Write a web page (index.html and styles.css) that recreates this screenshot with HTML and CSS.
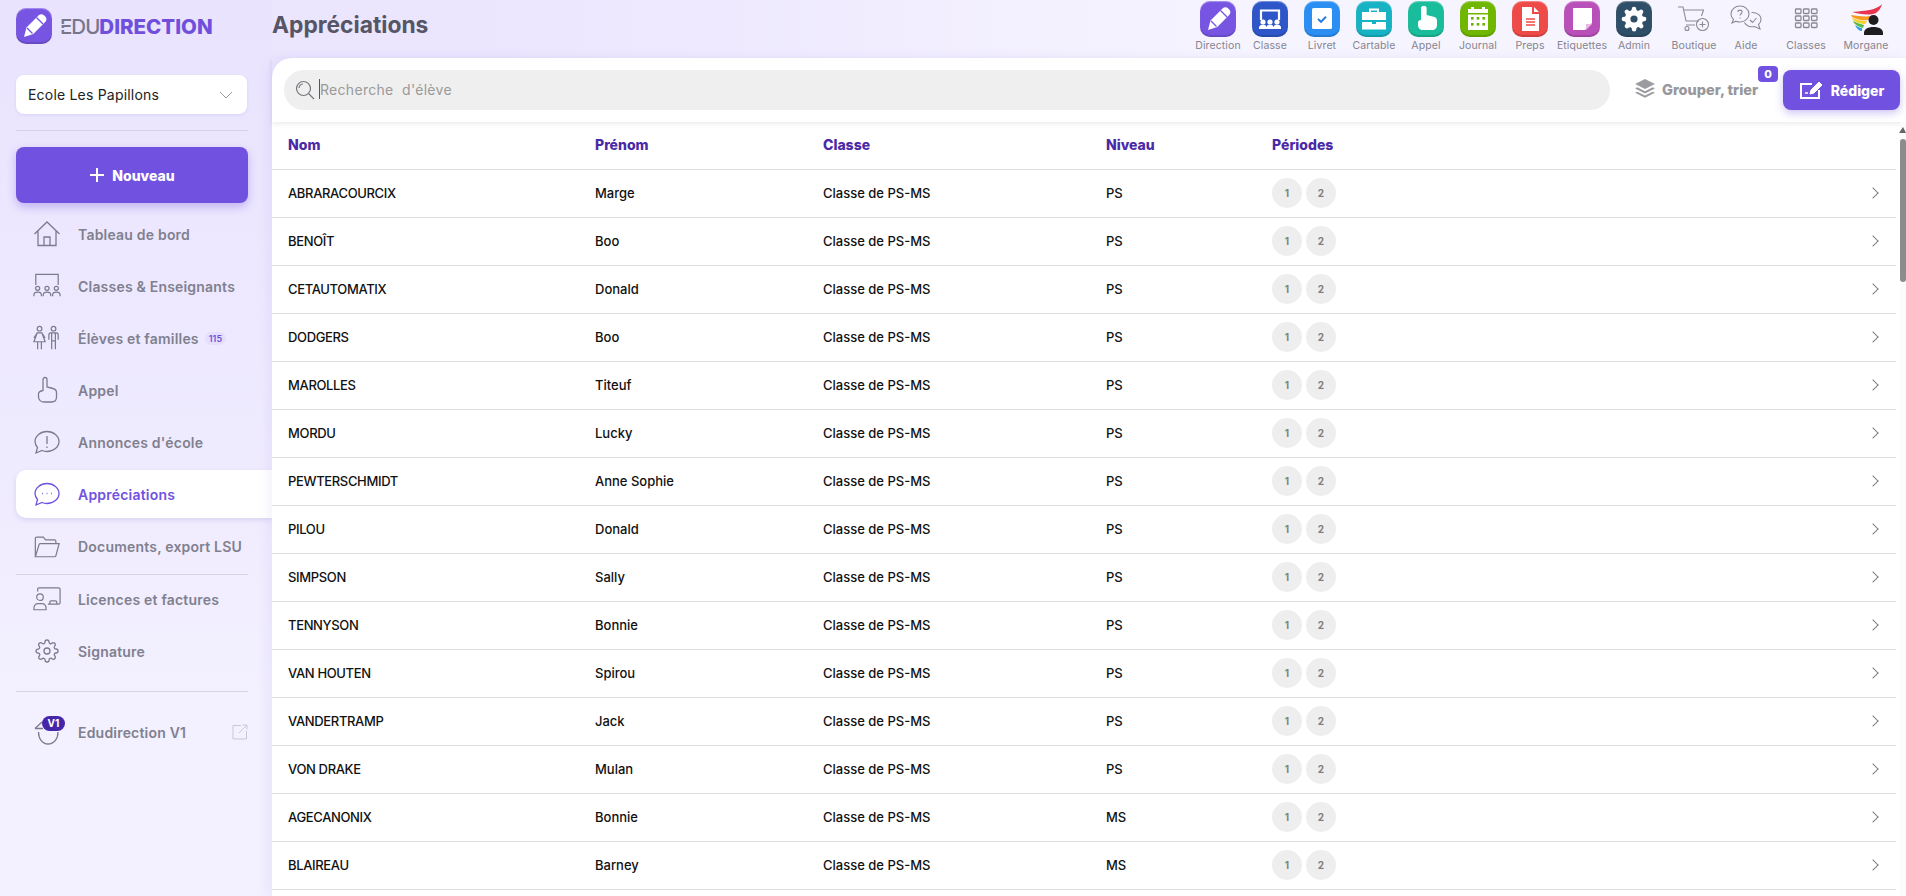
FILE: index.html
```html
<!DOCTYPE html>
<html lang="fr">
<head>
    <meta charset="UTF-8">
    <title>Appréciations</title>
    <link rel="stylesheet" href="styles.css">
</head>
<body>
    <svg class="defs" width="0" height="0">
        <symbol id="pen" viewBox="0 0 36 36">
            <path fill="#fff" d="M8 29l2.500-9.500L22.500 7.500c1.800-1.700 4-1.700 5.700 0l1 1c1.600 1.700 1.600 3.900 0 5.600L17.300 26z"/>
            <path fill="none" stroke="currentColor" stroke-width="1.300" d="M20.500 9.500l6.500 6.500M11 20l5.500 5.500"/>
        </symbol>
    </svg>

    <aside class="sidebar">
        <div class="logo">
            <span class="app logo-icon purple"><svg width="36" height="36"><use href="#pen"/></svg></span>
            <span class="logo-text"><span class="edu">EDU</span>DIRECTION</span>
        </div>

        <div class="school">
            <span>Ecole Les Papillons</span>
            <svg width="14" height="8" viewBox="0 0 14 8"><path d="M1 1l6 6 6-6" fill="none" stroke="#9a9aa5" stroke-width="1"/></svg>
        </div>
        <hr class="sep sep-top">

        <button class="new-btn">
            <svg width="16" height="16" viewBox="0 0 16 16"><path d="M8 1v14M1 8h14" stroke="#fff" stroke-width="2"/></svg>
            Nouveau
        </button>

        <nav class="nav">
            <a class="nav-item">
                <svg class="nav-icon" viewBox="0 0 28 28"><path d="M1.500 14L14 2l12.500 12M5 11v14.500h18V11M11 25.500V17h6v8.500"/></svg>
                Tableau de bord
            </a>
            <a class="nav-item">
                <svg class="nav-icon" viewBox="0 0 30 28"><path d="M3 13V1.500h24V13"/><circle cx="5" cy="16.500" r="2.200"/><circle cx="15" cy="16.500" r="2.200"/><circle cx="25" cy="16.500" r="2.200"/><path d="M1 25v-1.500c0-2 2-3 4-3s4 1 4 3V25M11 25v-1.500c0-2 2-3 4-3s4 1 4 3V25M21 25v-1.500c0-2 2-3 4-3s4 1 4 3V25"/></svg>
                Classes &amp; Enseignants
            </a>
            <a class="nav-item">
                <svg class="nav-icon" viewBox="0 0 30 28"><circle cx="7" cy="4" r="2.500"/><circle cx="22" cy="4" r="2.500"/><path d="M4.500 8.500h5L13 18H1zM1 14l3.500-5.500M13 14L9.500 8.500M5 18v8M9 18v8"/><path d="M19 8.500h6c1.500 0 2 1 2 2.500v5M17 16v-5c0-1.500.5-2.500 2-2.500M20 8.500V26M24 8.500V26M20 17h4"/></svg>
                Élèves et familles <span class="count">115</span>
            </a>
            <a class="nav-item">
                <svg class="nav-icon" viewBox="0 0 28 28"><path d="M10 15V3.500a2 2 0 0 1 4 0V11l6 1.500c2.500.6 3.500 1.800 3.500 4v4.500c0 3-2 5-5 5H11c-3 0-5.500-2-5.500-5v-3c0-1.500 1.500-3 4.500-3.500"/></svg>
                Appel
            </a>
            <a class="nav-item">
                <svg class="nav-icon" viewBox="0 0 28 28"><path d="M3 25l1.500-5.500C3 17.800 2 15.800 2 13.500 2 8 7.400 3.500 14 3.500S26 8 26 13.500 20.600 23.500 14 23.500c-2 0-3.500-.3-5-1z"/><path d="M14 8v8M14 18.500v1.500"/></svg>
                Annonces d'école
            </a>
            <a class="nav-item active">
                <svg class="nav-icon" viewBox="0 0 28 28"><path d="M3 25l1.500-5.500C3 17.800 2 15.800 2 13.500 2 8 7.400 3.500 14 3.500S26 8 26 13.500 20.600 23.500 14 23.500c-2 0-3.500-.3-5-1z"/><path d="M9 13.500h.8M13.600 13.500h.8M18.200 13.500h.8"/></svg>
                Appréciations
            </a>
            <a class="nav-item">
                <svg class="nav-icon" viewBox="0 0 30 28"><path d="M2.500 25V6c0-1 .7-1.500 1.500-1.500h7l2.500 3H23c1 0 1.500.5 1.500 1.500v2.500"/><path d="M2.500 25.500l4-13c.3-.8.8-1 1.500-1h20l-3.500 13c-.2.700-.7 1-1.500 1z"/></svg>
                Documents, export LSU
            </a>
            <hr class="sep sep-nav">
            <a class="nav-item">
                <svg class="nav-icon" viewBox="0 0 30 28"><path d="M5 6V3.500C5 2.500 5.500 2 6.500 2h21c1 0 1.500.5 1.500 1.500V18c0 1-.5 1.500-1.500 1.500H26M18 19.500v-2c0-1 .5-1.500 1.500-1.500H24c1 0 1.500.5 1.500 1.500v2M16 19.500h10"/><circle cx="7.500" cy="12" r="3.500"/><path d="M1 25.500v-2c0-2.500 2-4.500 4-4.500h5c2 0 4 2 4 4.500v2z"/></svg>
                Licences et factures
            </a>
            <a class="nav-item">
                <svg class="nav-icon gear" viewBox="0 0 24 24"><circle cx="12" cy="12" r="3"/><path d="M19.400 15a1.650 1.650 0 0 0 .33 1.820l.06.06a2 2 0 0 1 0 2.830 2 2 0 0 1-2.830 0l-.06-.06a1.650 1.650 0 0 0-1.820-.33 1.650 1.650 0 0 0-1 1.510V21a2 2 0 0 1-2 2 2 2 0 0 1-2-2v-.09A1.650 1.650 0 0 0 9 19.400a1.650 1.650 0 0 0-1.820.33l-.06.06a2 2 0 0 1-2.830 0 2 2 0 0 1 0-2.830l.06-.06a1.650 1.650 0 0 0 .33-1.820 1.650 1.650 0 0 0-1.510-1H3a2 2 0 0 1-2-2 2 2 0 0 1 2-2h.09A1.650 1.650 0 0 0 4.600 9a1.650 1.650 0 0 0-.33-1.820l-.06-.06a2 2 0 0 1 0-2.830 2 2 0 0 1 2.830 0l.06.06a1.650 1.650 0 0 0 1.820.33H9a1.650 1.650 0 0 0 1-1.510V3a2 2 0 0 1 2-2 2 2 0 0 1 2 2v.09a1.650 1.650 0 0 0 1 1.510 1.650 1.650 0 0 0 1.820-.33l.06-.06a2 2 0 0 1 2.830 0 2 2 0 0 1 0 2.830l-.06.06a1.650 1.650 0 0 0-.33 1.820V9a1.650 1.650 0 0 0 1.510 1H21a2 2 0 0 1 2 2 2 2 0 0 1-2 2h-.09a1.650 1.650 0 0 0-1.510 1z"/></svg>
                Signature
            </a>
            <hr class="sep sep-v1">
            <a class="nav-item v1-item">
                <span class="v1-icon">
                    <svg class="nav-icon" viewBox="0 0 28 28"><path d="M2 10.500h8M2 10.500L9 4M5.500 14c0 7 4 12 9.500 12 6 0 10-5 10-12"/></svg>
                    <span class="v1-badge">V1</span>
                </span>
                Edudirection V1
                <svg class="ext" width="16" height="16" viewBox="0 0 16 16"><path d="M9 1.500H1v13.500h13.500V7M7 9l8-8M10.500 1H15v4.500" fill="none" stroke="#c9c7d6" stroke-width="1"/></svg>
            </a>
        </nav>
    </aside>

    <div class="main">
        <header class="topbar">
            <h1>Appréciations</h1>
            <div class="apps">
                <a class="app-link"><span class="app purple"><svg width="36" height="36"><use href="#pen"/></svg></span>Direction</a>
                <a class="app-link"><span class="app blue">
                    <svg width="36" height="36" viewBox="0 0 36 36"><path d="M9 19V9.500h18V19" fill="none" stroke="#fff" stroke-width="2.200"/><g fill="#fff"><circle cx="11" cy="21" r="2.600"/><circle cx="18" cy="21" r="2.600"/><circle cx="25" cy="21" r="2.600"/><path d="M7 28v-1.500c0-2 2-2.700 4-2.700s3.500.7 3.500 2.700V28zM14.500 28v-1.500c0-2 1.500-2.700 3.500-2.700s3.500.7 3.500 2.700V28zM21.500 28v-1.500c0-2 1.500-2.700 3.500-2.700s4 .7 4 2.700V28z"/></g></svg>
                </span>Classe</a>
                <a class="app-link"><span class="app sky">
                    <svg width="36" height="36" viewBox="0 0 36 36"><rect x="8" y="7" width="20" height="21" rx="1.500" fill="#fff"/><path d="M14 18l3 2.800 5-5" fill="none" stroke="#2a7fe0" stroke-width="2"/></svg>
                </span>Livret</a>
                <a class="app-link"><span class="app teal">
                    <svg width="36" height="36" viewBox="0 0 36 36"><path d="M14 11V8.500h8V11" fill="none" stroke="#fff" stroke-width="2"/><path fill="#fff" d="M6 11h24v8H6zM6 21h10v2h4v-2h10v7.500H6z"/></svg>
                </span>Cartable</a>
                <a class="app-link"><span class="app green">
                    <svg width="36" height="36" viewBox="0 0 36 36"><path fill="#fff" d="M13 19V7.500a2.800 2.800 0 0 1 5.600 0V14l7 1.700c2.200.6 3.400 1.600 3.400 4V24c0 3-2 5-5 5h-9c-3 0-5-2-5-5v-2.500c0-1.500 1.300-2.300 3-2.500z"/></svg>
                </span>Appel</a>
                <a class="app-link"><span class="app lime">
                    <svg width="36" height="36" viewBox="0 0 36 36"><path fill="#fff" d="M8 8h3V6h3v2h8V6h3v2h3v4H8zM8 13.500h20V29H8z"/><g fill="#6cb000"><rect x="11" y="16" width="2.600" height="2.600"/><rect x="16.700" y="16" width="2.600" height="2.600"/><rect x="22.400" y="16" width="2.600" height="2.600"/><rect x="11" y="22" width="2.600" height="2.600"/><rect x="16.700" y="22" width="2.600" height="2.600"/><rect x="22.400" y="22" width="2.600" height="2.600"/></g></svg>
                </span>Journal</a>
                <a class="app-link"><span class="app red">
                    <svg width="36" height="36" viewBox="0 0 36 36"><path fill="#fff" d="M10 6h10v7h7v17H10zM22 6l5 5h-5z"/><path d="M14 18h9M14 21h9M14 24h9" stroke="#ef4a48" stroke-width="1.400"/></svg>
                </span>Preps</a>
                <a class="app-link"><span class="app pink">
                    <svg width="36" height="36" viewBox="0 0 36 36"><path fill="#fff" d="M9 7h19v15l-7 7H9z"/><path fill="#e9b7e6" d="M22 23h6l-6 6z"/></svg>
                </span>Etiquettes</a>
                <a class="app-link"><span class="app slate">
                    <svg width="36" height="36" viewBox="0 0 24 24"><g transform="translate(12 12) scale(.75) translate(-12 -12)"><path fill="#fff" d="M19.400 15a1.650 1.650 0 0 0 .33 1.820l.06.06a2 2 0 0 1 0 2.830 2 2 0 0 1-2.830 0l-.06-.06a1.650 1.650 0 0 0-1.820-.33 1.650 1.650 0 0 0-1 1.510V21a2 2 0 0 1-2 2 2 2 0 0 1-2-2v-.09A1.650 1.650 0 0 0 9 19.400a1.650 1.650 0 0 0-1.820.33l-.06.06a2 2 0 0 1-2.830 0 2 2 0 0 1 0-2.830l.06-.06a1.650 1.650 0 0 0 .33-1.820 1.650 1.650 0 0 0-1.510-1H3a2 2 0 0 1-2-2 2 2 0 0 1 2-2h.09A1.650 1.650 0 0 0 4.600 9a1.650 1.650 0 0 0-.33-1.820l-.06-.06a2 2 0 0 1 0-2.830 2 2 0 0 1 2.830 0l.06.06a1.650 1.650 0 0 0 1.820.33H9a1.650 1.650 0 0 0 1-1.510V3a2 2 0 0 1 2-2 2 2 0 0 1 2 2v.09a1.650 1.650 0 0 0 1 1.510 1.650 1.650 0 0 0 1.820-.33l.06-.06a2 2 0 0 1 2.830 0 2 2 0 0 1 0 2.830l-.06.06a1.650 1.650 0 0 0-.33 1.820V9a1.650 1.650 0 0 0 1.510 1H21a2 2 0 0 1 2 2 2 2 0 0 1-2 2h-.09a1.650 1.650 0 0 0-1.510 1z"/><circle cx="12" cy="12" r="3.200" fill="#2f4f68"/></g></svg>
                </span>Admin</a>
                <a class="app-link apart"><span class="plain">
                    <svg width="36" height="36" viewBox="0 0 36 36" fill="none" stroke="#8b8b95" stroke-width="1.100"><path d="M2 6h5l3 14h13M7.500 9h20l-2 6M10 24h9"/><circle cx="11" cy="27.500" r="2"/><circle cx="26.500" cy="23.500" r="6"/><path d="M26.500 20.500v6M23.500 23.500h6"/></svg>
                </span>Boutique</a>
                <a class="app-link"><span class="plain">
                    <svg width="36" height="36" viewBox="0 0 36 36" fill="none" stroke="#8b8b95" stroke-width="1.100"><path d="M4 22l1.500-3.500C4 17 3 15 3 13 3 8.500 7 5 12 5s9 3.500 9 8-4 8-9 8c-1.500 0-2.700-.2-4-.8z"/><path d="M10 11c0-2.500 4-2.500 4 0 0 2-2 2-2 3.500M12 16.500v1"/><path d="M23.500 11.500c5-.5 9.500 2.500 9.500 7 0 2-1 3.700-2.500 5L32 28l-5.500-2.500c-4 1-8.500-.5-10-4"/><path d="M22 19l2.500 2.500 4-4.500"/></svg>
                </span>Aide</a>
                <a class="app-link apart"><span class="plain">
                    <svg width="36" height="36" viewBox="0 0 36 36" fill="none" stroke="#8b8b95" stroke-width="1.300"><rect x="7.500" y="8" width="5.500" height="4.500" rx=".8"/><rect x="15.500" y="8" width="5.500" height="4.500" rx=".8"/><rect x="23.500" y="8" width="5.500" height="4.500" rx=".8"/><rect x="7.500" y="15" width="5.500" height="4.500" rx=".8"/><rect x="15.500" y="15" width="5.500" height="4.500" rx=".8"/><rect x="23.500" y="15" width="5.500" height="4.500" rx=".8"/><rect x="7.500" y="22" width="5.500" height="4.500" rx=".8"/><rect x="15.500" y="22" width="5.500" height="4.500" rx=".8"/><rect x="23.500" y="22" width="5.500" height="4.500" rx=".8"/></svg>
                </span>Classes</a>
                <a class="app-link apart"><span class="plain">
                    <svg width="36" height="36" viewBox="0 0 36 36"><path fill="#e8344c" d="M4 11c8-1 18-1 24-4 3-1 5-3 6-4-1 4-3 7-6 9-7 3-16 1-24-1z"/><path fill="#f59a23" d="M3 14c7 1 14 2 20 1l-3 4c-6 1-12-1-16-3z"/><path fill="#f4d22a" d="M4 17c5 2 10 3 15 3l-2 3c-5 0-9-2-12-4z"/><path fill="#5cb947" d="M5 20c4 2 8 3 11 4l-1 3c-4-1-7-3-9-5z"/><path fill="#2f9de0" d="M7 24c3 2 5 3 7 3v3c-3 0-5-2-7-6z"/><circle cx="25.500" cy="19" r="5" fill="#1d1d1f"/><path fill="#1d1d1f" d="M16 34v-2c0-4 4-6 9.500-6s9.500 2 9.500 6v2z"/></svg>
                </span>Morgane</a>
            </div>
        </header>

        <section class="panel">
            <div class="toolbar">
                <div class="search">
                    <svg width="20" height="20" viewBox="0 0 20 20" fill="none" stroke="#77777f" stroke-width="1.200"><circle cx="8.500" cy="8.500" r="7"/><path d="M4 8a4.500 4.500 0 0 1 4-4M13.500 13.500L19 19"/></svg>
                    <input class="search-input" placeholder="Recherche  d'élève">
                </div>
                <button class="group-btn">
                    <svg width="22" height="22" viewBox="0 0 20 20" fill="#9b9ba0"><path d="M10 1l9 4.500L10 10 1 5.500z"/><path d="M1 9.500l2-1 7 3.500 7-3.500 2 1L10 14z"/><path d="M1 13.500l2-1 7 3.500 7-3.500 2 1L10 18z"/></svg>
                    Grouper, trier
                    <span class="group-count">0</span>
                </button>
                <button class="write-btn">
                    <svg width="26" height="24" viewBox="0 0 26 24" fill="none" stroke="#fff" stroke-width="2"><path d="M13 6H2v14h18v-8"/><path d="M6 15h3M11 15l2 0" stroke-width="1.600"/><path d="M12 12l8-8 3 3-8 8-4 1z" fill="#fff" stroke-width="1"/></svg>
                    Rédiger
                </button>
            </div>

            <div class="table">
                <div class="row head">
                    <span>Nom</span><span>Prénom</span><span>Classe</span><span>Niveau</span><span>Périodes</span><span></span>
                </div>
                <div class="row"><span class="last">ABRARACOURCIX</span><span>Marge</span><span>Classe de PS-MS</span><span>PS</span><span class="periods"><b>1</b><b>2</b></span><i class="chev"></i></div>
                <div class="row"><span class="last">BENOÎT</span><span>Boo</span><span>Classe de PS-MS</span><span>PS</span><span class="periods"><b>1</b><b>2</b></span><i class="chev"></i></div>
                <div class="row"><span class="last">CETAUTOMATIX</span><span>Donald</span><span>Classe de PS-MS</span><span>PS</span><span class="periods"><b>1</b><b>2</b></span><i class="chev"></i></div>
                <div class="row"><span class="last">DODGERS</span><span>Boo</span><span>Classe de PS-MS</span><span>PS</span><span class="periods"><b>1</b><b>2</b></span><i class="chev"></i></div>
                <div class="row"><span class="last">MAROLLES</span><span>Titeuf</span><span>Classe de PS-MS</span><span>PS</span><span class="periods"><b>1</b><b>2</b></span><i class="chev"></i></div>
                <div class="row"><span class="last">MORDU</span><span>Lucky</span><span>Classe de PS-MS</span><span>PS</span><span class="periods"><b>1</b><b>2</b></span><i class="chev"></i></div>
                <div class="row"><span class="last">PEWTERSCHMIDT</span><span>Anne Sophie</span><span>Classe de PS-MS</span><span>PS</span><span class="periods"><b>1</b><b>2</b></span><i class="chev"></i></div>
                <div class="row"><span class="last">PILOU</span><span>Donald</span><span>Classe de PS-MS</span><span>PS</span><span class="periods"><b>1</b><b>2</b></span><i class="chev"></i></div>
                <div class="row"><span class="last">SIMPSON</span><span>Sally</span><span>Classe de PS-MS</span><span>PS</span><span class="periods"><b>1</b><b>2</b></span><i class="chev"></i></div>
                <div class="row"><span class="last">TENNYSON</span><span>Bonnie</span><span>Classe de PS-MS</span><span>PS</span><span class="periods"><b>1</b><b>2</b></span><i class="chev"></i></div>
                <div class="row"><span class="last">VAN HOUTEN</span><span>Spirou</span><span>Classe de PS-MS</span><span>PS</span><span class="periods"><b>1</b><b>2</b></span><i class="chev"></i></div>
                <div class="row"><span class="last">VANDERTRAMP</span><span>Jack</span><span>Classe de PS-MS</span><span>PS</span><span class="periods"><b>1</b><b>2</b></span><i class="chev"></i></div>
                <div class="row"><span class="last">VON DRAKE</span><span>Mulan</span><span>Classe de PS-MS</span><span>PS</span><span class="periods"><b>1</b><b>2</b></span><i class="chev"></i></div>
                <div class="row"><span class="last">AGECANONIX</span><span>Bonnie</span><span>Classe de PS-MS</span><span>MS</span><span class="periods"><b>1</b><b>2</b></span><i class="chev"></i></div>
                <div class="row"><span class="last">BLAIREAU</span><span>Barney</span><span>Classe de PS-MS</span><span>MS</span><span class="periods"><b>1</b><b>2</b></span><i class="chev"></i></div>
            </div>

            <div class="scrollbar"><span class="thumb"></span></div>
        </section>
    </div>
</body>
</html>
```

FILE: styles.css
```css
* {
    box-sizing: border-box;
}
html, body {
    height: 100%;
    margin: 0;
}
body {
    display: flex;
    overflow: hidden;
    background: linear-gradient(90deg, #ebe5fe 0%, #ebe5fe 25%, #f6f4ff 65%);
    font-family: Inter, "Open Sans", sans-serif;
    color: #111;
}
.defs {
    position: absolute;
}
a {
    color: inherit;
    text-decoration: none;
}
button {
    font-family: inherit;
    cursor: pointer;
}

/* barre de gauche */
.sidebar {
    width: 272px;
    flex: none;
    padding: 8px 0 0 16px;
    background: linear-gradient(180deg, #e9e3fe 0%, #f3f0ff 80%);
}
.logo {
    display: flex;
    align-items: center;
    gap: 8px;
    height: 36px;
    margin-bottom: 31px;
}
.logo-text {
    font-size: 20.5px;
    font-weight: 800;
    color: #6f4fdc;
}
.edu {
    position: relative;
    color: #77778a;
    font-weight: 500;
    letter-spacing: -1px;
}
.edu::after {
    content: "";
    position: absolute;
    left: 0;
    top: 0;
    bottom: 0;
    width: 12px;
    background: linear-gradient(180deg, transparent 9.5px, #e9e3fe 9.5px, #e9e3fe 11px, transparent 11px, transparent 14px, #e9e3fe 14px, #e9e3fe 15.5px, transparent 15.5px);
}
.school {
    width: 231px;
    height: 39px;
    padding: 0 14px 0 12px;
    display: flex;
    align-items: center;
    justify-content: space-between;
    background: #fff;
    border-radius: 8px;
    box-shadow: 0 1px 3px rgba(90, 70, 160, .12);
    font-size: 14px;
    letter-spacing: .2px;
    color: #222;
}
.sep {
    width: 232px;
    height: 1px;
    margin: 0;
    border: 0;
    background: #d6d1e6;
}
.sep-top {
    margin: 16px 0;
}
.new-btn {
    width: 232px;
    height: 56px;
    display: flex;
    align-items: center;
    justify-content: center;
    gap: 7px;
    border: 0;
    border-radius: 8px;
    background: #7152e0;
    box-shadow: 0 4px 10px rgba(113, 82, 224, .35);
    color: #fff;
    font-size: 14px;
    font-weight: 800;
}
.nav {
    margin-top: 7px;
    display: flex;
    flex-direction: column;
}
.nav-item {
    height: 48px;
    margin-bottom: 4px;
    padding-left: 17px;
    display: flex;
    align-items: center;
    gap: 17px;
    font-size: 14px;
    font-weight: 600;
    letter-spacing: .2px;
    color: #80808f;
    border-radius: 10px 0 0 10px;
}
.nav-icon {
    width: 28px;
    height: 28px;
    flex: none;
    fill: none;
    stroke: #7b7b8c;
    stroke-width: 1.300;
}
.gear {
    padding: 2px;
}
.nav-item.active {
    background: #fff;
    color: #7152e0;
    box-shadow: 0 2px 5px rgba(90, 70, 160, .15);
}
.active .nav-icon {
    stroke: #7152e0;
}
.count {
    margin-left: -11px;
    padding: 1px 4px;
    border-radius: 8px;
    background: #e6dffc;
    color: #7152e0;
    font-size: 9px;
    letter-spacing: 0;
}
.sep-v1 {
    margin: 12px 0 16px;
}
.v1-item {
    width: 232px;
}
.v1-icon {
    position: relative;
    display: flex;
}
.v1-badge {
    position: absolute;
    left: 9px;
    top: -2px;
    width: 23px;
    height: 15px;
    border-radius: 8px;
    background: #4526a8;
    color: #fff;
    font-size: 10px;
    font-weight: 700;
    line-height: 15px;
    text-align: center;
}
.ext {
    margin-left: auto;
}

/* haut de page */
.main {
    flex: 1;
    min-width: 0;
    display: flex;
    flex-direction: column;
}
.topbar {
    height: 58px;
    flex: none;
    display: flex;
    justify-content: space-between;
    padding-right: 14px;
}
h1 {
    margin: 10px 0 0;
    font-size: 22.8px;
    font-weight: 700;
    line-height: 30px;
    color: #555566;
}
.apps {
    display: flex;
}
.app-link {
    width: 52px;
    padding-top: 1px;
    display: flex;
    flex-direction: column;
    align-items: center;
    gap: 3px;
    font-size: 10.5px;
    line-height: 12px;
    letter-spacing: .1px;
    color: #85858f;
    white-space: nowrap;
}
.app-link.apart {
    margin-left: 8px;
}
.app, .plain {
    width: 36px;
    height: 36px;
    flex: none;
    display: block;
}
.app {
    border-radius: 10px;
    color: #7152e0;
    box-shadow: inset 0 -2px 1px rgba(0, 0, 0, .14), inset 0 1px 1px rgba(255, 255, 255, .35);
}
.app svg, .plain svg {
    display: block;
}
.logo-icon {
    color: #7152e0;
}
.purple { background: #7755e2; }
.blue { background: #2e56c9; }
.sky { background: #2b8ef2; }
.teal { background: #17b3c4; }
.green { background: #19bd9b; }
.lime { background: #6fb700; }
.red { background: #ee4a48; }
.pink { background: #b94fb9; }
.slate { background: #2f4f68; }

/* panneau blanc */
.panel {
    flex: 1;
    min-height: 0;
    position: relative;
    background: #fff;
    border-top-left-radius: 20px;
    box-shadow: -4px 0 12px rgba(110, 85, 200, .08);
}
.toolbar {
    height: 64px;
    padding: 12px 6px 12px 12px;
    display: flex;
    align-items: center;
    box-shadow: 0 2px 5px rgba(0, 0, 0, .08);
    position: relative;
}
.search {
    flex: 1;
    height: 40px;
    padding: 0 14px 0 11px;
    display: flex;
    align-items: center;
    gap: 4px;
    border-radius: 20px;
    background: #efefef;
}
.search-input {
    flex: 1;
    height: 20px;
    margin-bottom: 2px;
    padding: 0;
    border: 0;
    border-left: 1px solid #555;
    outline: 0;
    background: none;
    font-family: inherit;
    font-size: 14px;
    letter-spacing: .3px;
    white-space: pre;
}
.search-input::placeholder {
    color: #9a9a9a;
}
.group-btn {
    width: 173px;
    height: 40px;
    flex: none;
    padding: 0 0 2px 24px;
    display: flex;
    align-items: center;
    gap: 6px;
    position: relative;
    border: 0;
    background: none;
    color: #97979c;
    font-size: 14.5px;
    font-weight: 800;
    white-space: nowrap;
}
.group-count {
    position: absolute;
    right: 5px;
    top: -4px;
    width: 20px;
    height: 16px;
    border-radius: 4px;
    background: #7152e0;
    color: #fff;
    font-size: 11px;
    line-height: 16px;
    text-align: center;
}
.write-btn {
    width: 117px;
    height: 40px;
    flex: none;
    display: flex;
    align-items: center;
    justify-content: center;
    gap: 6px;
    border: 0;
    border-radius: 8px;
    background: #7152e0;
    box-shadow: 0 3px 8px rgba(113, 82, 224, .35);
    color: #fff;
    font-size: 14px;
    font-weight: 800;
}
.table {
    margin-right: 10px;
}
.row {
    height: 48px;
    padding: 0 0 1px 16px;
    display: grid;
    grid-template-columns: 307px 228px 283px 166px 1fr 30px;
    align-items: center;
    border-bottom: 1px solid #dedede;
    font-size: 13px;
    font-weight: 500;
}
.last {
    letter-spacing: -.35px;
}
.head {
    padding-bottom: 2px;
    color: #4a2aa6;
    font-size: 14px;
    font-weight: 800;
}
.periods {
    display: flex;
    gap: 4px;
}
.periods b {
    width: 30px;
    height: 30px;
    border-radius: 50%;
    background: #eee;
    color: #808080;
    font-size: 10px;
    line-height: 30px;
    text-align: center;
}
.chev {
    width: 8px;
    height: 8px;
    margin-left: 3px;
    border-top: 1px solid #808080;
    border-right: 1px solid #808080;
    transform: rotate(45deg);
}
.scrollbar {
    position: absolute;
    right: 0;
    top: 64px;
    bottom: 0;
    width: 6px;
    background: #fbfbfb;
}
.scrollbar::before {
    content: "";
    position: absolute;
    right: 0;
    top: 5px;
    border-left: 4px solid transparent;
    border-right: 3px solid transparent;
    border-bottom: 6px solid #666;
}
.thumb {
    position: absolute;
    left: 0;
    top: 17px;
    width: 6px;
    height: 143px;
    border-radius: 3px;
    background: #8c8c8c;
}
```
